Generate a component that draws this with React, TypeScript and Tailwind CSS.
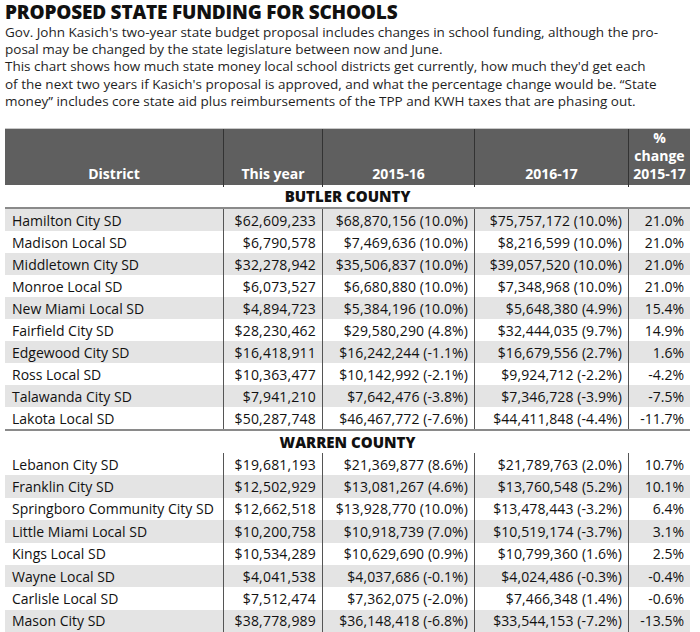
import React from 'react';

type Row = [string, string, string, string, string];

const butler: Row[] = [
  ['Hamilton City SD', '$62,609,233', '$68,870,156 (10.0%)', '$75,757,172 (10.0%)', '21.0%'],
  ['Madison Local SD', '$6,790,578', '$7,469,636 (10.0%)', '$8,216,599 (10.0%)', '21.0%'],
  ['Middletown City SD', '$32,278,942', '$35,506,837 (10.0%)', '$39,057,520 (10.0%)', '21.0%'],
  ['Monroe Local SD', '$6,073,527', '$6,680,880 (10.0%)', '$7,348,968 (10.0%)', '21.0%'],
  ['New Miami Local SD', '$4,894,723', '$5,384,196 (10.0%)', '$5,648,380 (4.9%)', '15.4%'],
  ['Fairfield City SD', '$28,230,462', '$29,580,290 (4.8%)', '$32,444,035 (9.7%)', '14.9%'],
  ['Edgewood City SD', '$16,418,911', '$16,242,244 (-1.1%)', '$16,679,556 (2.7%)', '1.6%'],
  ['Ross Local SD', '$10,363,477', '$10,142,992 (-2.1%)', '$9,924,712 (-2.2%)', '-4.2%'],
  ['Talawanda City SD', '$7,941,210', '$7,642,476 (-3.8%)', '$7,346,728 (-3.9%)', '-7.5%'],
  ['Lakota Local SD', '$50,287,748', '$46,467,772 (-7.6%)', '$44,411,848 (-4.4%)', '-11.7%'],
];

const warren: Row[] = [
  ['Lebanon City SD', '$19,681,193', '$21,369,877 (8.6%)', '$21,789,763 (2.0%)', '10.7%'],
  ['Franklin City SD', '$12,502,929', '$13,081,267 (4.6%)', '$13,760,548 (5.2%)', '10.1%'],
  ['Springboro Community City SD', '$12,662,518', '$13,928,770 (10.0%)', '$13,478,443 (-3.2%)', '6.4%'],
  ['Little Miami Local SD', '$10,200,758', '$10,918,739 (7.0%)', '$10,519,174 (-3.7%)', '3.1%'],
  ['Kings Local SD', '$10,534,289', '$10,629,690 (0.9%)', '$10,799,360 (1.6%)', '2.5%'],
  ['Wayne Local SD', '$4,041,538', '$4,037,686 (-0.1%)', '$4,024,486 (-0.3%)', '-0.4%'],
  ['Carlisle Local SD', '$7,512,474', '$7,362,075 (-2.0%)', '$7,466,348 (1.4%)', '-0.6%'],
  ['Mason City SD', '$38,778,989', '$36,148,418 (-6.8%)', '$33,544,153 (-7.2%)', '-13.5%'],
];

const cols = 'grid grid-cols-[219px_99px_152px_154px_61px]';

const DataRow = ({ row, shaded, tall }: { row: Row; shaded: boolean; tall: boolean }) => (
  <div
    className={`${cols} ${tall ? 'h-[22.4px]' : 'h-[22px]'} text-[14px] font-medium text-[#111] ${
      shaded ? 'bg-[#e4e4e4]' : 'bg-white'
    }`}
  >
    <div className="flex items-center pl-[7px] border-r border-[#555]">{row[0]}</div>
    <div className="flex items-center justify-end pr-[6px] tracking-[0.2px] border-r border-[#555]">{row[1]}</div>
    <div className="flex items-center justify-end pr-[6px] tracking-[0.1px] border-r border-[#555]">{row[2]}</div>
    <div className="flex items-center justify-end pr-[6px] tracking-[0.1px] border-r border-[#555]">{row[3]}</div>
    <div className="flex items-center justify-end pr-[6px]">{row[4]}</div>
  </div>
);

const CountyRow = ({ name }: { name: string }) => (
  <div className="h-[22px] flex items-center justify-center text-[15px] font-extrabold text-[#111] bg-white">
    {name}
  </div>
);

export default function App() {
  return (
    <div className="w-[700px] h-[632px] overflow-hidden bg-white font-['Open_Sans',sans-serif] text-[#1f1f1f]">
      <div className="px-[5px] pt-[2px]">
        <h1 className="text-[19px] leading-[21px] font-extrabold tracking-[-0.2px] text-[#111]">
          PROPOSED STATE FUNDING FOR SCHOOLS
        </h1>
        <p className="mt-[1px] text-[13.5px] leading-[17.2px] whitespace-nowrap">
          Gov. John Kasich's two-year state budget proposal includes changes in school funding, although the pro-
          <br />
          posal may be changed by the state legislature between now and June.
          <br />
          This chart shows how much state money local school districts get currently, how much they'd get each
          <br />
          of the next two years if Kasich's proposal is approved, and what the percentage change would be. “State
          <br />
          money” includes core state aid plus reimbursements of the TPP and KWH taxes that are phasing out.
        </p>
      </div>

      <div className="ml-[5px] mt-[18px] w-[685px]">
        <div
          className={`${cols} h-[57px] bg-[#5f5f5f] border-t border-[#c8c8c8] text-white text-[14px] font-bold leading-[18px]`}
        >
          <div className="flex items-end justify-center pb-[4px] border-r border-[#333]">District</div>
          <div className="flex items-end justify-center pb-[4px] border-r border-[#333]">This year</div>
          <div className="flex items-end justify-center pb-[4px] border-r border-[#333]">2015-16</div>
          <div className="flex items-end justify-center pb-[4px] border-r border-[#333]">2016-17</div>
          <div className="flex items-end justify-center pb-[4px] text-center">
            %<br />change<br />2015-17
          </div>
        </div>

        <CountyRow name="BUTLER COUNTY" />
        <div className="border-t-2 border-b-2 border-[#8a8a8a]">
          {butler.map((r, i) => (
            <DataRow key={r[0]} row={r} shaded={i % 2 === 0} tall={false} />
          ))}
        </div>

        <CountyRow name="WARREN COUNTY" />
        <div>
          {warren.map((r, i) => (
            <DataRow key={r[0]} row={r} shaded={i % 2 === 1} tall={true} />
          ))}
        </div>
      </div>
    </div>
  );
}
